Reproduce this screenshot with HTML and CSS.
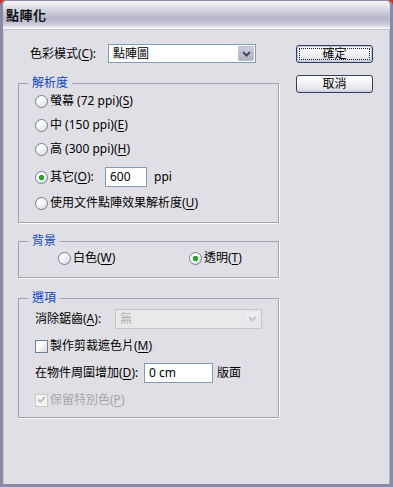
FILE: index.html
```html
<!DOCTYPE html>
<html lang="zh-Hant">
<head>
<meta charset="utf-8">
<title>點陣化</title>
<link rel="stylesheet" href="styles.css">
</head>
<body>
<div class="window">
  <div class="titlebar"><span class="title">點陣化</span></div>
  <div class="client">
    <div class="main">
      <div class="row mode-row">
        <span class="lbl lbl-mode">色彩模式(<u>C</u>):</span>
        <div class="combo combo-mode">
          <span class="combo-text">點陣圖</span>
          <span class="combo-btn"><svg width="9" height="6" viewBox="0 0 9 6"><path d="M1 1 L4.5 4.5 L8 1" fill="none" stroke="#3b4763" stroke-width="2"/></svg></span>
        </div>
      </div>

      <fieldset class="group group-res">
        <legend>解析度</legend>
        <div class="group-body">
          <div class="row opt"><span class="radio"></span><span>螢幕 (72 ppi)(<u>S</u>)</span></div>
          <div class="row opt"><span class="radio"></span><span>中 (150 ppi)(<u>E</u>)</span></div>
          <div class="row opt"><span class="radio"></span><span>高 (300 ppi)(<u>H</u>)</span></div>
          <div class="row opt opt-other"><span class="radio checked"></span><span class="lbl-other">其它(<u>O</u>):</span><span class="field field-ppi">600</span><span class="unit">ppi</span></div>
          <div class="row opt opt-doc"><span class="radio"></span><span>使用文件點陣效果解析度(<u>U</u>)</span></div>
        </div>
      </fieldset>

      <fieldset class="group group-bg">
        <legend>背景</legend>
        <div class="group-body bg-body">
          <div class="row opt bg-white"><span class="radio"></span><span>白色(<u>W</u>)</span></div>
          <div class="row opt"><span class="radio checked"></span><span>透明(<u>T</u>)</span></div>
        </div>
      </fieldset>

      <fieldset class="group group-opt">
        <legend>選項</legend>
        <div class="group-body opt-body">
          <div class="row">
            <span class="lbl lbl-aa">消除鋸齒(<u>A</u>):</span>
            <div class="combo combo-aa disabled">
              <span class="combo-text">無</span>
              <span class="combo-btn"><svg width="9" height="6" viewBox="0 0 9 6"><path d="M1 1 L4.5 4.5 L8 1" fill="none" stroke="#c4c4cc" stroke-width="2"/></svg></span>
            </div>
          </div>
          <div class="row opt"><span class="check"></span><span>製作剪裁遮色片(<u>M</u>)</span></div>
          <div class="row">
            <span class="lbl lbl-pad">在物件周圍增加(<u>D</u>):</span>
            <span class="field field-cm">0 cm</span>
            <span class="unit unit-face">版面</span>
          </div>
          <div class="row opt disabled-text"><span class="check check-disabled"><svg width="9" height="8" viewBox="0 0 9 8"><path d="M1 3.5 L3.5 6 L8 1" fill="none" stroke="#c2c2bc" stroke-width="2"/></svg></span><span>保留特別色(<u>P</u>)</span></div>
        </div>
      </fieldset>
    </div>

    <div class="buttons">
      <button class="btn btn-default" type="button">確定</button>
      <button class="btn" type="button">取消</button>
    </div>
  </div>
</div>
</body>
</html>
```

FILE: styles.css
```css
html, body {
  margin: 0;
  padding: 0;
}

body {
  width: 393px;
  height: 487px;
  overflow: hidden;
  background: #d42a1f;
  font-family: "Noto Sans", "Noto Sans CJK TC", sans-serif;
  font-size: 12px;
  color: #000;
}

.window {
  box-sizing: border-box;
  width: 393px;
  height: 487px;
  display: flex;
  flex-direction: column;
  background: #e0dfe5;
  border: 3px solid #8a8aa6;
  border-top: 1px solid #8e8eaa;
  border-radius: 6px 6px 0 0;
  box-shadow: inset 1px 0 0 #c6c6d6, inset -1px 0 0 #b2b2c6;
  overflow: hidden;
}

.titlebar {
  height: 28px;
  flex: none;
  display: flex;
  align-items: center;
  padding-left: 3px;
  background: linear-gradient(#f8f8fb 0%, #e4e4ec 18%, #c6c6d6 45%, #b7b7ca 62%, #c8c8d8 82%, #e9e9f0 94%, #ffffff 100%);
  border-bottom: 1px solid #c0c0cc;
}

.title {
  font-weight: bold;
  font-size: 13px;
  line-height: 16px;
  letter-spacing: 0.5px;
  color: #111;
}

.client {
  flex: 1;
  display: flex;
  gap: 17px;
  padding: 14px 17px 0 15px;
}

.main {
  width: 261px;
  display: flex;
  flex-direction: column;
}

.row {
  height: 20px;
  display: flex;
  align-items: center;
  white-space: nowrap;
  line-height: 14px;
}

u {
  text-decoration: underline;
  text-underline-offset: 2px;
}

.mode-row {
  padding-left: 12px;
  height: 19px;
}

.lbl-mode { width: 78px; }

.combo {
  box-sizing: border-box;
  height: 19px;
  display: flex;
  align-items: stretch;
  background: #fff;
  border: 1px solid #7f9db9;
}

.combo-mode { width: 148px; }

.combo-text {
  flex: 1;
  padding-left: 4px;
  display: flex;
  align-items: center;
}

.combo-btn {
  width: 16px;
  margin: 1px;
  display: flex;
  align-items: center;
  justify-content: center;
  background: linear-gradient(#d0d0de, #adadc4);
  border-radius: 2px;
  box-shadow: inset 0 0 0 1px #bdbdd0;
}

.combo.disabled {
  background: #e9e9ec;
  border-color: #c9c7c0;
  color: #b0b0b0;
}

.combo.disabled .combo-btn {
  background: linear-gradient(#f0f0f2, #e4e4e8);
  box-shadow: inset 0 0 0 1px #e6e6ea;
}

.combo-aa {
  width: 147px;
  height: 20px;
}

.group {
  margin: 0;
  padding: 0;
  min-width: 0;
  border: 1px solid #a3a3ab;
  box-shadow: 1px 1px 0 #ffffff;
}

.group legend {
  margin-left: 9px;
  padding: 0 4px;
  font-size: 12px;
  line-height: 12px;
  color: #0b46c8;
}

.group-body {
  display: flex;
  flex-direction: column;
  gap: 4px;
  padding: 2px 0 9px 16px;
}

.group-res { margin-top: 14px; }
.group-bg { margin-top: 12px; }
.group-opt { margin-top: 14px; }

.opt { gap: 2px; }

.opt-other { margin-top: 4px; }
.opt-doc { margin-top: 2px; }

.radio {
  box-sizing: border-box;
  width: 13px;
  height: 13px;
  flex: none;
  border-radius: 50%;
  border: 1px solid #6e7f98;
  background: linear-gradient(135deg, #f2f2f4 0%, #ffffff 35%, #d6d6dc 100%);
}

.radio.checked {
  background:
    radial-gradient(circle at 50% 50%, #3cb03c 0, #1f9a1f 2.2px, rgba(0,0,0,0) 3px),
    linear-gradient(135deg, #f2f2f4 0%, #ffffff 35%, #d6d6dc 100%);
}

.lbl-other { width: 53px; }

.field {
  box-sizing: border-box;
  height: 20px;
  display: flex;
  align-items: center;
  padding-left: 4px;
  background: #fff;
  border: 1px solid #7f9db9;
}

.field-ppi { width: 42px; }

.unit { margin-left: 5px; }

.bg-body {
  flex-direction: row;
  gap: 0;
  padding: 1px 0 9px 39px;
}

.bg-white { width: 131px; }

.opt-body {
  gap: 7px;
  padding: 5px 0 7px 16px;
}

.lbl-aa { width: 80px; }
.lbl-pad { width: 109px; }

.field-cm { width: 69px; }

.unit-face { margin-left: 4px; }

.check {
  box-sizing: border-box;
  width: 13px;
  height: 13px;
  flex: none;
  display: flex;
  align-items: center;
  justify-content: center;
  border: 1px solid #6e7f98;
  background: linear-gradient(135deg, #f2f2f4 0%, #ffffff 35%, #d6d6dc 100%);
}

.check-disabled {
  border-color: #cac8c0;
  background: #f4f4f2;
}

.disabled-text { color: #a6a6a6; }

.buttons {
  display: flex;
  flex-direction: column;
  gap: 12px;
  padding-top: 1px;
}

.btn {
  box-sizing: border-box;
  width: 77px;
  height: 18px;
  padding: 0;
  font-family: "Noto Sans", "Noto Sans CJK TC", sans-serif;
  font-size: 12px;
  line-height: 14px;
  color: #000;
  border: 1px solid #2f3f5e;
  border-radius: 3px;
  background: linear-gradient(#ffffff 0%, #f4f4f8 40%, #e2e2ec 85%, #c9c9da 100%);
}

.btn-default {
  box-shadow: inset 0 0 0 1px #b8c8e8;
  outline: 1px dotted #222;
  outline-offset: -4px;
}
```
